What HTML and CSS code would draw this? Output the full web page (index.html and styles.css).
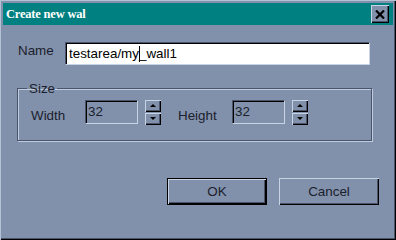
FILE: index.html
```html
<!DOCTYPE html>
<html>
<head>
<meta charset="utf-8">
<link rel="stylesheet" href="styles.css">
</head>
<body>
<div class="window">
  <div class="titlebar">
    <span class="title">Create new wal</span>
    <div class="close"><svg width="10" height="9" viewBox="0 0 10 9"><path d="M1 0.5 L9 8.5 M9 0.5 L1 8.5" stroke="#000" stroke-width="2.2"/></svg></div>
  </div>
  <div class="content">
    <div class="name-row">
      <span class="label name-label">Name</span>
      <div class="edit name-edit">testarea/my<span class="caret"></span>_wall1</div>
    </div>
    <fieldset class="group">
      <legend class="legend">Size</legend>
      <div class="size-row">
        <span class="label size-label">Width</span>
        <div class="edit num-edit">32</div>
        <div class="spin">
          <div class="spin-btn"><span class="tri-up"></span></div>
          <div class="spin-btn"><span class="tri-down"></span></div>
        </div>
        <span class="label size-label height-label">Height</span>
        <div class="edit num-edit">32</div>
        <div class="spin">
          <div class="spin-btn"><span class="tri-up"></span></div>
          <div class="spin-btn"><span class="tri-down"></span></div>
        </div>
      </div>
    </fieldset>
    <div class="buttons">
      <div class="btn default">OK</div>
      <div class="btn">Cancel</div>
    </div>
  </div>
</div>
</body>
</html>
```
FILE: styles.css
```css
html, body {
  margin: 0;
  padding: 0;
  background: #8291ab;
}
.window {
  width: 396px;
  height: 240px;
  box-sizing: border-box;
  padding: 3px;
  background: #8291ab;
  box-shadow: inset 1px 1px 0 #b4c2d6, inset -1px -1px 0 #000, inset -2px -2px 0 #4a546a;
  font-family: "Liberation Sans", Arial, sans-serif;
  font-size: 13.4px;
  color: #1a1e2c;
}
.titlebar {
  height: 22px;
  background: #008080;
  display: flex;
  align-items: center;
  justify-content: space-between;
  padding: 0 4px 0 3px;
}
.title {
  font-family: "Liberation Serif", "Times New Roman", serif;
  font-weight: bold;
  font-size: 12.5px;
  letter-spacing: -0.2px;
  color: #fff;
  line-height: 15px;
}
.close {
  width: 18px;
  height: 18px;
  box-sizing: border-box;
  background: #8291ab;
  display: flex;
  align-items: center;
  justify-content: center;
  box-shadow: inset 1px 1px 0 #c8d4e4, inset -1px -1px 0 #000, inset -2px -2px 0 #4a546a;
}
.close svg { display: block; margin-top: 1px; }
.content {
  padding: 17px 14px 0 15px;
}
.label {
  line-height: 15px;
  color: #1a1e2c;
}
.name-row {
  display: flex;
  align-items: flex-start;
  height: 23px;
}
.name-label {
  width: 47px;
  margin-top: 1px;
}
.edit {
  box-sizing: border-box;
  border-style: solid;
  border-width: 1px;
  border-color: #4a546a #c8d4e4 #c8d4e4 #4a546a;
  box-shadow: inset 1px 1px 0 #000;
  line-height: 19px;
  white-space: nowrap;
}
.name-edit {
  width: 305px;
  height: 23px;
  background: #fff;
  padding: 1px 0 0 3px;
  color: #000;
}
.caret {
  display: inline-block;
  width: 1px;
  height: 16px;
  background: #000;
  margin-right: -1px;
  vertical-align: -4px;
}
.group {
  margin: 16px 0 0 -1px;
  width: 355px;
  box-sizing: border-box;
  padding: 4px 0 12px 13px;
  border: 1px solid #4a546a;
  box-shadow: 1px 1px 0 #c0cde0, inset 1px 1px 0 #c0cde0;
  height: 60px;
}
.legend {
  padding: 0 2px;
  margin-left: -4px;
  line-height: 15px;
}
.size-row {
  display: flex;
  align-items: center;
  height: 24px;
}
.size-label {
  width: 54px;
  margin-top: 6px;
}
.height-label {
  margin-left: 17px;
}
.num-edit {
  width: 53px;
  height: 24px;
  padding: 1px 0 0 2px;
  background: #8291ab;
  color: #1a1e2c;
}
.spin {
  margin-left: 7px;
  width: 16px;
  height: 25px;
  display: flex;
  flex-direction: column;
  gap: 1px;
}
.spin-btn {
  flex: 1;
  box-sizing: border-box;
  background: #8291ab;
  box-shadow: inset 1px 1px 0 #c8d4e4, inset -1px -1px 0 #000, inset -2px -2px 0 #4a546a;
  display: flex;
  align-items: center;
  justify-content: center;
}
.tri-up, .tri-down {
  width: 0;
  height: 0;
  border-left: 3px solid transparent;
  border-right: 3px solid transparent;
  margin-right: 1px;
}
.tri-up { border-bottom: 3px solid #000; }
.tri-down { border-top: 3px solid #000; }
.buttons {
  display: flex;
  justify-content: flex-end;
  gap: 12px;
  margin-top: 37px;
}
.btn {
  width: 100px;
  height: 27px;
  box-sizing: border-box;
  display: flex;
  align-items: center;
  justify-content: center;
  background: #8291ab;
  box-shadow: inset 1px 1px 0 #c8d4e4, inset -1px -1px 0 #000, inset -2px -2px 0 #4a546a;
  line-height: 15px;
}
.btn.default {
  border: 1px solid #000;
}
```
